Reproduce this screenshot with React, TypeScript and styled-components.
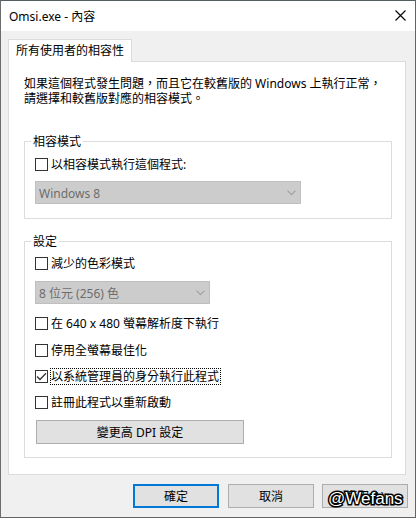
import React, { FC, ReactNode } from "react";
import styled, { createGlobalStyle } from "styled-components";

const GlobalStyle = createGlobalStyle`
    * {
        box-sizing: border-box;
    }

    body {
        margin: 0;
        background: #fff;
    }
`;

export default function App() {
    return (
        <>
            <GlobalStyle />
            <Window>
                <TitleBar>
                    <Title>Omsi.exe - 內容</Title>
                    <CloseIcon />
                </TitleBar>
                <Body>
                    <Tab>所有使用者的相容性</Tab>
                    <Panel>
                        <Intro>
                            如果這個程式發生問題，而且它在較舊版的 Windows 上執行正常，
                            <br />
                            請選擇和較舊版對應的相容模式。
                        </Intro>
                        <Group $height={78} $top={31}>
                            <Legend>相容模式</Legend>
                            <CheckOption label="以相容模式執行這個程式:" top={16} />
                            <SelectBox width={266} top={10}>
                                Windows 8
                            </SelectBox>
                        </Group>
                        <Group $height={217} $top={22}>
                            <Legend>設定</Legend>
                            <CheckOption label="減少的色彩模式" top={15} />
                            <SelectBox width={175} top={11}>
                                8 位元 (256) 色
                            </SelectBox>
                            <CheckOption label="在 640 x 480 螢幕解析度下執行" top={13} />
                            <CheckOption label="停用全螢幕最佳化" top={14} />
                            <CheckOption
                                label="以系統管理員的身分執行此程式"
                                top={13}
                                checked
                            />
                            <CheckOption label="註冊此程式以重新啟動" top={13} />
                            <DpiButton>變更高 DPI 設定</DpiButton>
                        </Group>
                    </Panel>
                    <Footer>
                        <OkButton>確定</OkButton>
                        <Button>取消</Button>
                        <ApplyButton>
                            套用(A)
                            <Watermark>@Wefans</Watermark>
                        </ApplyButton>
                    </Footer>
                </Body>
            </Window>
        </>
    );
}

const CloseIcon = () => (
    <svg width="11" height="11" viewBox="0 0 11 11">
        <path d="M.5.5l10 10M10.5.5l-10 10" stroke="#000" strokeWidth="1.1" fill="none" />
    </svg>
);

type CheckOptionProps = {
    label: string;
    top: number;
    checked?: boolean;
};

const CheckOption: FC<CheckOptionProps> = ({ label, top, checked }) => (
    <CheckRow $top={top}>
        <CheckSquare>
            {checked && (
                <svg width="11" height="11" viewBox="0 0 11 11">
                    <path d="M1 5.5l3 3L10 2.2" stroke="#333" strokeWidth="1.3" fill="none" />
                </svg>
            )}
        </CheckSquare>
        <CheckLabel $focused={checked}>{label}</CheckLabel>
    </CheckRow>
);

type SelectBoxProps = {
    width: number;
    top: number;
    children: ReactNode;
};

const SelectBox: FC<SelectBoxProps> = ({ width, top, children }) => (
    <SelectFrame $width={width} $top={top}>
        <SelectText>{children}</SelectText>
        <svg width="9" height="6" viewBox="0 0 9 6">
            <path d="M.5.7l4 4 4-4" stroke="#a0a0a0" strokeWidth="1.1" fill="none" />
        </svg>
    </SelectFrame>
);

const Window = styled.div`
    display: flex;
    flex-direction: column;
    width: 416px;
    height: 518px;
    border: 1px solid #626567;
    border-top-color: #555d60;
    border-left-color: #6c6c6e;
    background: #f0f0f0;
    color: #000;
    font-family: "Noto Sans", "Noto Sans CJK TC", sans-serif;
    font-size: 12px;
    line-height: 15px;
    white-space: nowrap;
`;

const TitleBar = styled.header`
    display: flex;
    align-items: center;
    justify-content: space-between;
    height: 30px;
    flex: none;
    padding: 0 9px 2px 8px;
    background: #fff;
`;

const Title = styled.div`
    padding-top: 2px;
`;

const Body = styled.main`
    display: flex;
    flex-direction: column;
    padding: 8px 9px 0 7px;
`;

const Tab = styled.div`
    width: 124px;
    height: 23px;
    margin-bottom: -1px;
    padding: 3px 0 0 7px;
    border: 1px solid #dcdcdc;
    border-bottom: 0;
    background: #fff;
    z-index: 1;
`;

const Panel = styled.section`
    height: 414px;
    padding: 14px 13px 0 15px;
    border: 1px solid #dcdcdc;
    background: #fff;
`;

const Intro = styled.p`
    margin: 0;
    height: 34px;
`;

const Group = styled.div<{ $height: number; $top: number }>`
    display: flex;
    flex-direction: column;
    align-items: flex-start;
    height: ${(props) => props.$height}px;
    margin-top: ${(props) => props.$top}px;
    padding-left: 10px;
    border: 1px solid #dcdcdc;
`;

const Legend = styled.div`
    height: 15px;
    margin: -8px 0 -7px -4px;
    padding: 0 2px;
    background: #fff;
`;

const CheckRow = styled.label<{ $top: number }>`
    display: flex;
    align-items: center;
    gap: 2px;
    height: 13px;
    margin-top: ${(props) => props.$top}px;
`;

const CheckSquare = styled.span`
    display: flex;
    width: 13px;
    height: 13px;
    border: 1px solid #333;
    background: #fff;
`;

const CheckLabel = styled.span<{ $focused?: boolean }>`
    height: 17px;
    padding-right: 1px;
    border: 1px dotted ${(props) => (props.$focused ? "#000" : "transparent")};
`;

const SelectFrame = styled.div<{ $width: number; $top: number }>`
    display: flex;
    align-items: center;
    justify-content: space-between;
    width: ${(props) => props.$width}px;
    height: 23px;
    margin-top: ${(props) => props.$top}px;
    padding: 0 4px 0 3px;
    border: 1px solid #bfbfbf;
    background: #ccc;
    color: #6d6d6d;
`;

const SelectText = styled.span`
    padding-top: 1px;
`;

const Button = styled.button`
    width: 86px;
    height: 24px;
    padding: 0;
    border: 1px solid #adadad;
    background: #e1e1e1;
    color: #000;
    font: inherit;
`;

const DpiButton = styled(Button)`
    width: 208px;
    margin: 11px 0 0 1px;
`;

const OkButton = styled(Button)`
    border: 2px solid #0078d7;
`;

const ApplyButton = styled(Button)`
    position: relative;
    margin-left: -1px;
`;

const Footer = styled.footer`
    display: flex;
    justify-content: flex-end;
    gap: 9px;
    margin: 9px -2px 0 0;
`;

const Watermark = styled.span`
    position: absolute;
    left: 5px;
    top: 4px;
    color: #fff;
    font: 17px/20px "Liberation Sans", sans-serif;
    -webkit-text-stroke: 3px #000;
    paint-order: stroke fill;
`;
